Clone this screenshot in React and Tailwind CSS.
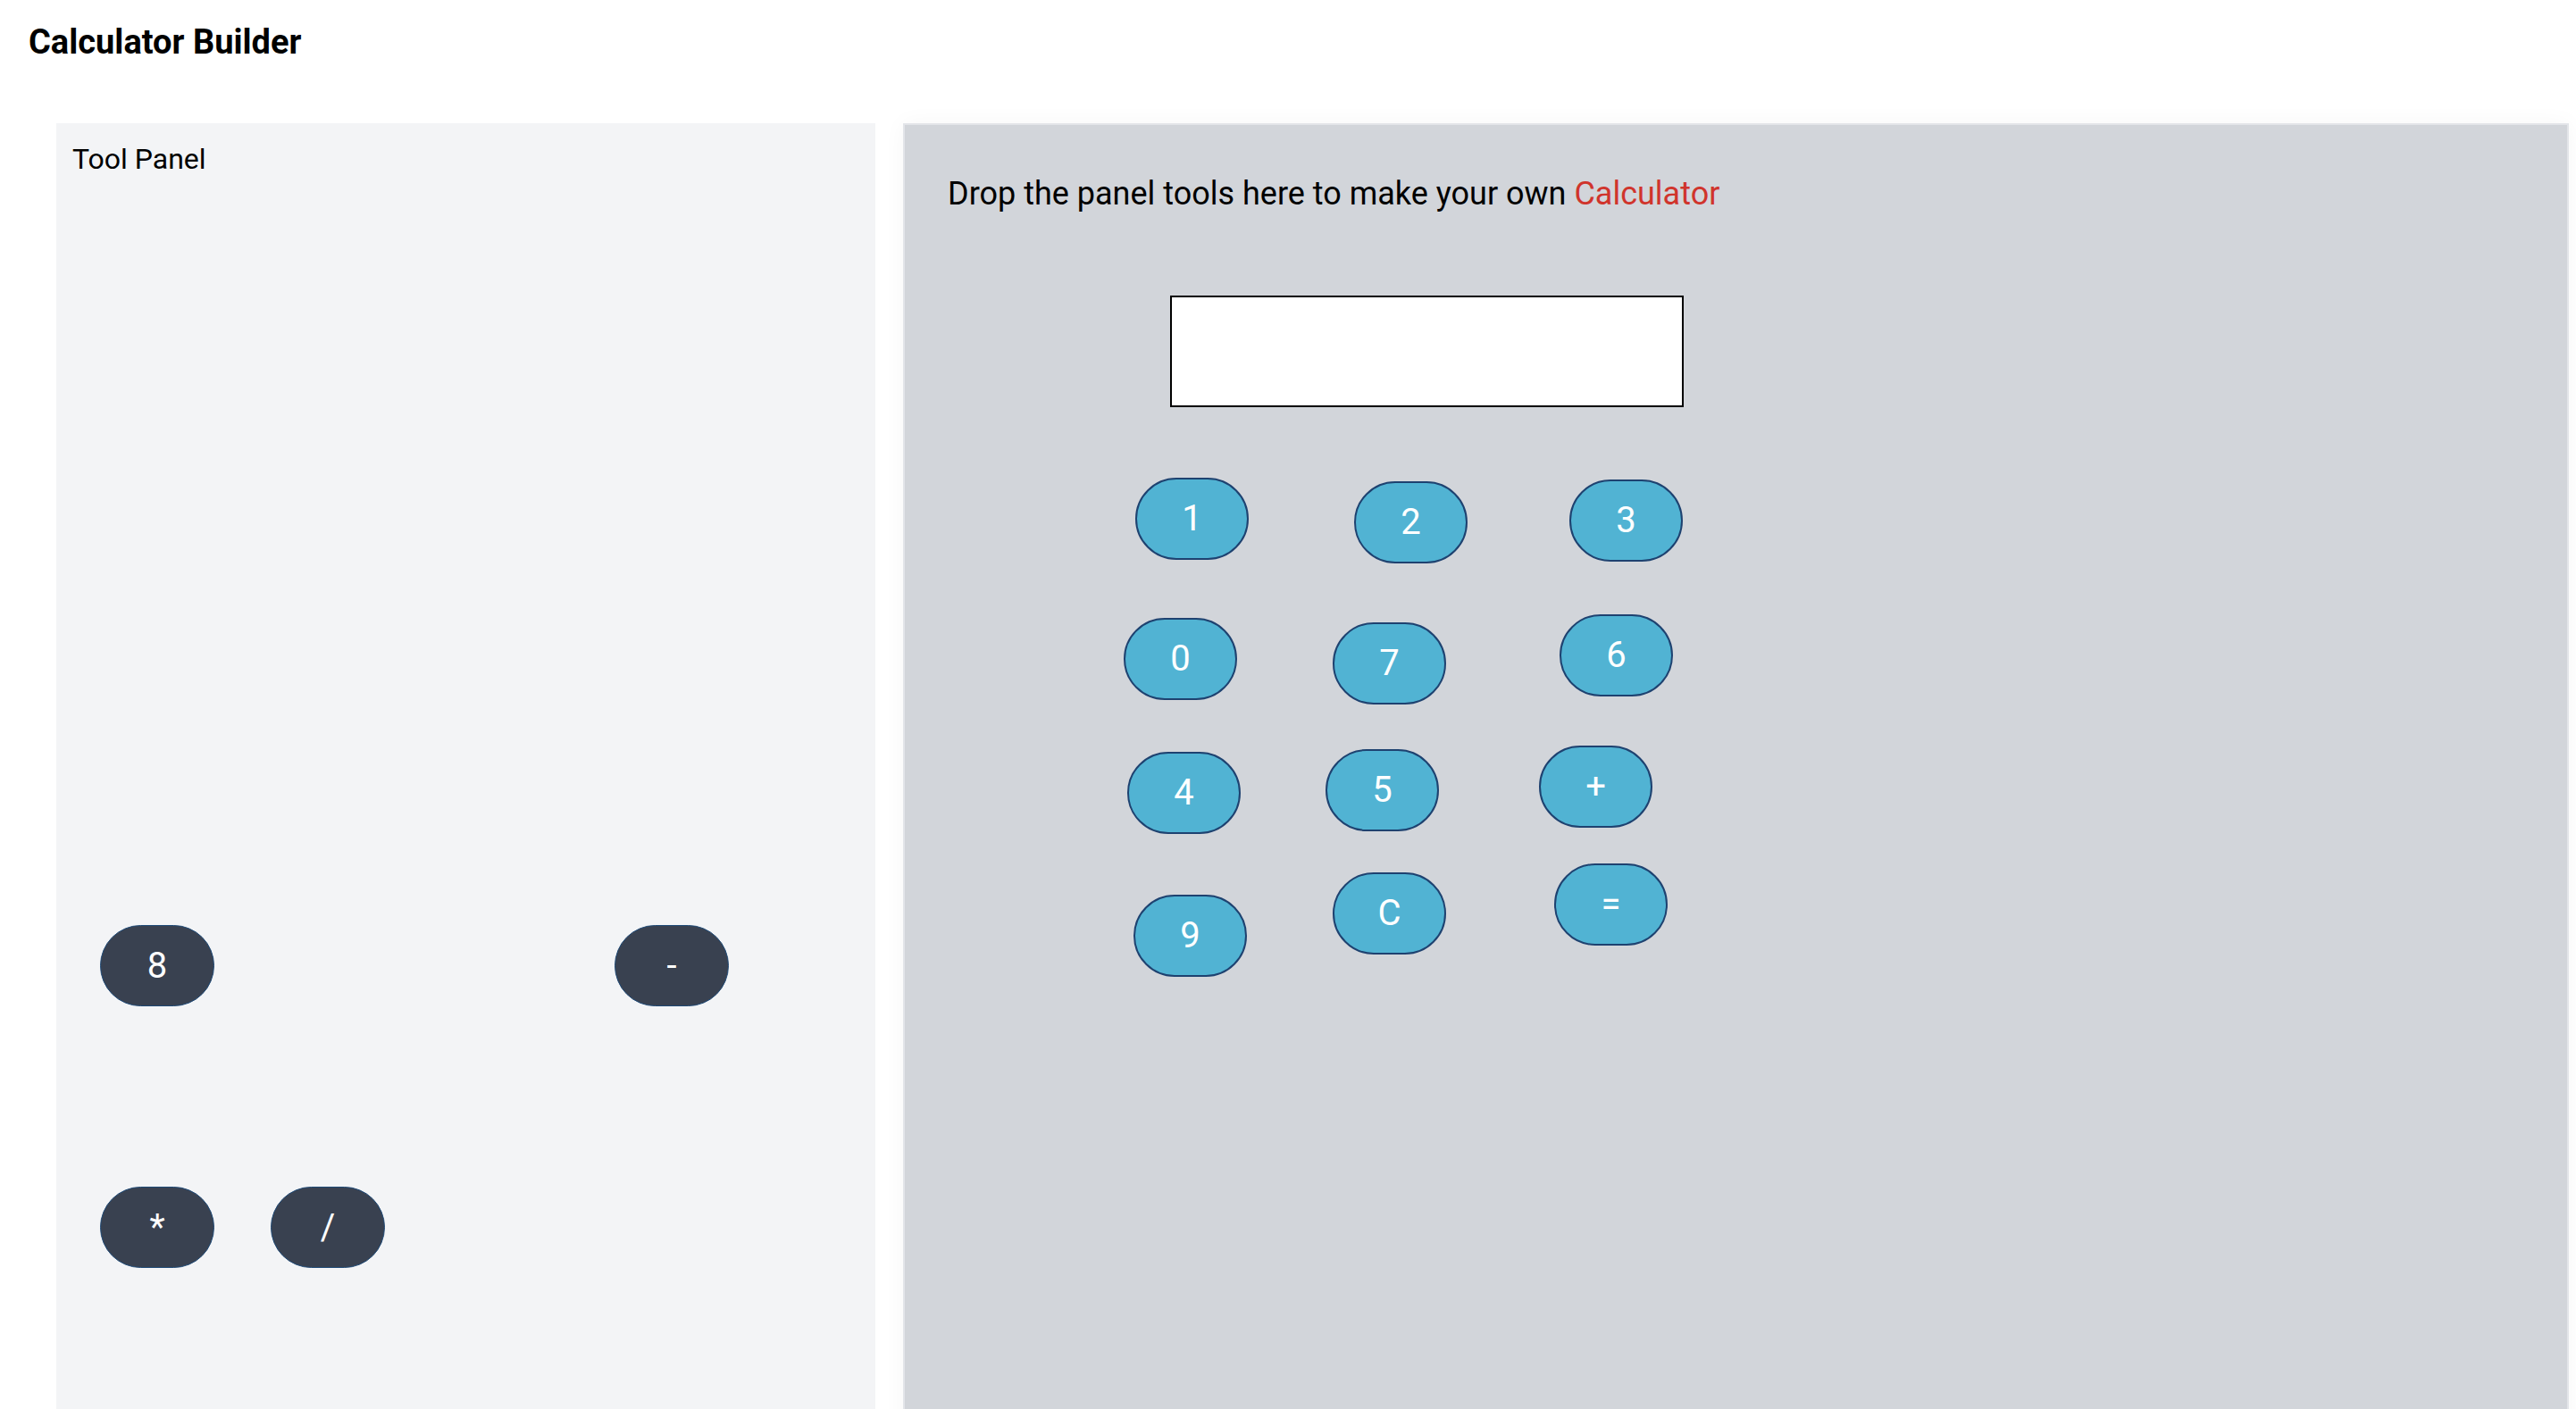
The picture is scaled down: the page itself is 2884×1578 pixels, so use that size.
// App.jsx

import React from 'react';

// Tools still waiting in the panel, positioned where they were left
const panelTools = [
  { label: '8', x: 49, y: 898 },
  { label: '-', x: 625, y: 898 },
  { label: '*', x: 49, y: 1191 },
  { label: '/', x: 240, y: 1191 },
];

// Tools already dropped on the calculator canvas
const droppedTools = [
  { label: '1', x: 258, y: 395 },
  { label: '2', x: 503, y: 399 },
  { label: '3', x: 744, y: 397 },
  { label: '0', x: 245, y: 552 },
  { label: '7', x: 479, y: 557 },
  { label: '6', x: 733, y: 548 },
  { label: '4', x: 249, y: 702 },
  { label: '5', x: 471, y: 699 },
  { label: '+', x: 710, y: 695 },
  { label: '9', x: 256, y: 862 },
  { label: 'C', x: 479, y: 837 },
  { label: '=', x: 727, y: 827 },
];

const ToolButton = ({ label, x, y, dark }) => (
  <button
    className={
      dark
        ? 'absolute w-[128px] h-[91px] rounded-full bg-[#394150] border border-[#1e4976] text-white text-[40px] flex items-center justify-center'
        : 'absolute w-[127px] h-[92px] rounded-full bg-[#51b3d3] border-2 border-[#1e4270] text-white text-[40px] flex items-center justify-center'
    }
    style={{ left: x, top: y }}
  >
    {label}
  </button>
);

const App = () => {
  return (
    <div className="h-[1578px] overflow-hidden bg-white text-black font-['Roboto','Liberation_Sans',sans-serif] flex flex-col">
      {/* Header */}
      <h1 className="pl-[32px] pt-[20px] text-[38px] leading-[54px] font-bold">Calculator Builder</h1>

      <div className="flex gap-[31px] ml-[63px] mr-[8px] mt-[64px]">
        {/* Tool Panel */}
        <div className="relative w-[917px] h-[1500px] shrink-0 bg-[#f3f4f6] px-[18px] pt-[16px]">
          <p className="text-[32px] leading-[48px]">Tool Panel</p>
          {panelTools.map(tool => (
            <ToolButton key={tool.label} {...tool} dark />
          ))}
        </div>

        {/* Drop area */}
        <div className="relative flex-1 h-[1500px] bg-[#d2d5da] border-2 border-[#e3e5e9] shadow-[0_0_24px_rgba(0,0,0,0.04)] px-[48px] pt-[50px]">
          <p className="text-[36px] leading-[54px]">
            Drop the panel tools here to make your own <span className="text-[#d0342c]">Calculator</span>
          </p>

          {/* Display */}
          <div className="absolute left-[297px] top-[191px] w-[575px] h-[125px] bg-white border-2 border-black"></div>

          {droppedTools.map(tool => (
            <ToolButton key={tool.label} {...tool} />
          ))}
        </div>
      </div>
    </div>
  );
};

export default App;
